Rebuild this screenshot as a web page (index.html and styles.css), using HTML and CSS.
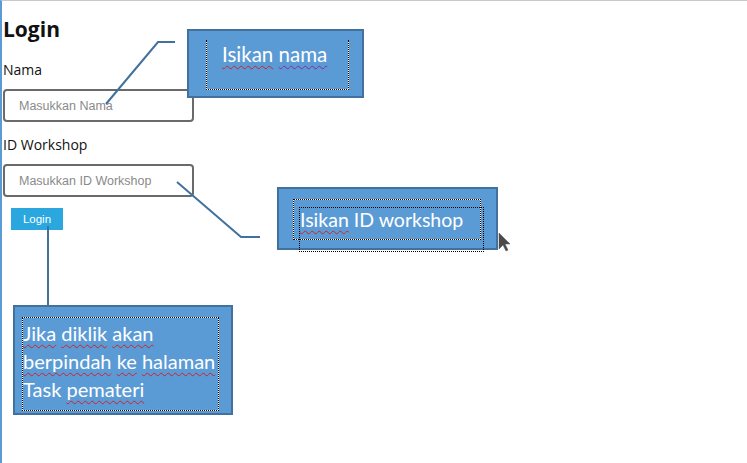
FILE: index.html
```html
<!DOCTYPE html>
<html lang="en">
<head>
<meta charset="UTF-8">
<meta name="viewport" content="width=device-width, initial-scale=1.0">
<title>Login</title>
<link rel="stylesheet" href="styles.css">
</head>
<body>
<div class="page">

    <form class="login-form">
        <h2 class="login-title">Login</h2>
        <label class="field-label" for="nama">Nama</label>
        <input class="field-input" id="nama" type="text" placeholder="Masukkan Nama">
        <label class="field-label" for="idws">ID Workshop</label>
        <input class="field-input" id="idws" type="text" placeholder="Masukkan ID Workshop">
        <button class="login-button" type="button">Login</button>
    </form>

    <!-- annotation lines -->
    <svg class="connectors" width="747" height="463" viewBox="0 0 747 463">
        <polyline points="175,42 158,42 106,104" />
        <polyline points="177,182 241,237 260,237" />
        <polyline points="48,226 48,305" />
        <path class="cursor" d="M499 233 L499 249 L503 245 L506 251 L508 250 L505 244 L510 244 Z" />
    </svg>

    <div class="callout callout-nama">
        <div class="callout-frame frame-nama">
            <span class="spell">Isikan</span> <span class="spell grammar">nama</span>
        </div>
    </div>

    <div class="callout callout-id">
        <div class="callout-frame frame-id-back"></div>
        <div class="callout-frame frame-id">
            <span class="spell">Isikan</span> ID workshop
        </div>
    </div>

    <div class="callout callout-login">
        <div class="callout-frame frame-login">
            <span class="spell">Jika</span> <span class="spell">diklik</span> <span class="spell">akan</span><br>
            <span class="spell">berpindah</span> <span class="spell">ke</span> <span class="spell">halaman</span><br>
            Task <span class="spell">pemateri</span>
        </div>
    </div>

</div>
</body>
</html>
```

FILE: styles.css
```css
body, html {
    margin: 0;
    padding: 0;
    height: 100%;
    background-color: white;
}

.page {
    position: relative;
    width: 745px;
    height: 462px;
    border-top: 1px solid #c8c8c8;
    border-left: 2px solid #5b9bd5;
    overflow: hidden;
    font-family: 'Open Sans', sans-serif;
    color: #111;
}

.login-form {
    display: flex;
    flex-direction: column;
    align-items: flex-start;
    padding: 15px 0 0 1px;
}

.login-title {
    margin: 0;
    font-size: 21px;
    line-height: 26px;
    font-weight: bold;
}

.field-label {
    font-size: 14px;
    line-height: 20px;
    margin-top: 18px;
}

.field-input {
    box-sizing: border-box;
    width: 191px;
    height: 33px;
    margin-top: 9px;
    padding: 0 14px;
    border: 2px solid #6a6a6a;
    border-radius: 4px;
    font-family: 'Liberation Sans', Arial, sans-serif;
    font-size: 12.5px;
    outline: none;
}

.field-input::placeholder {
    color: #8a8a8a;
}

.field-input + .field-label {
    margin-top: 13px;
}

.login-button {
    margin: 11px 0 0 8px;
    width: 52px;
    height: 22px;
    padding: 0;
    border: none;
    background-color: #2aa7df;
    color: white;
    font-family: 'Liberation Sans', Arial, sans-serif;
    font-size: 11.5px;
}

.connectors {
    position: absolute;
    top: -1px;
    left: -2px;
    pointer-events: none;
}

.connectors polyline {
    fill: none;
    stroke: #41719c;
    stroke-width: 2;
}

.connectors .cursor {
    fill: #4a4a4a;
    stroke: #555;
    stroke-width: 0.5;
}

/* callout boxes */
.callout {
    position: absolute;
    box-sizing: border-box;
    background-color: #5b9bd5;
    border: 2px solid #41719c;
    font-family: 'Lato', 'Open Sans', sans-serif;
    color: white;
    font-size: 20px;
}

.callout-frame {
    position: absolute;
    box-sizing: border-box;
    border: 1px dotted #000;
    background: linear-gradient(#5b9bd5, #5b9bd5) padding-box, #fff;
    white-space: nowrap;
}

.spell {
    text-decoration: underline wavy #d0202a;
    text-decoration-thickness: 1px;
    text-underline-offset: 3px;
}

.spell.grammar {
    text-decoration-color: #8a2a9a;
}

.callout-nama {
    left: 185px;
    top: 28px;
    width: 177px;
    height: 69px;
}

.frame-nama {
    left: 17px;
    top: 9px;
    width: 143px;
    height: 50px;
    border-top: none;
    padding: 1px 0 0 15px;
    line-height: 26px;
    font-size: 20.5px;
}

.callout-id {
    left: 275px;
    top: 186px;
    width: 221px;
    height: 63px;
}

.frame-id-back {
    left: 14px;
    top: 10px;
    width: 188px;
    height: 41px;
}

.frame-id {
    left: 20px;
    top: 20px;
    width: 185px;
    height: 45px;
    background: transparent;
    padding: 0;
    line-height: 24px;
    margin-top: -2px;
    font-size: 19.5px;
}

.callout-login {
    left: 11px;
    top: 304px;
    width: 220px;
    height: 110px;
    overflow: visible;
}

.frame-login {
    left: 7px;
    top: 10px;
    width: 197px;
    height: 94px;
    padding: 1px 0 0 0;
    line-height: 28px;
}
```
